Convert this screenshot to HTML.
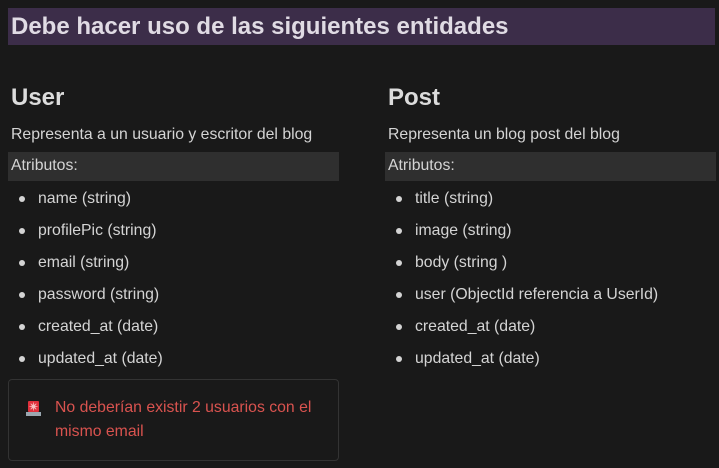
<!DOCTYPE html><html><head><style>
body{margin:0;background:#191919;font-family:"Liberation Sans",sans-serif;color:#d4d4d4;width:719px;height:468px;overflow:hidden;position:relative}
.t{position:absolute;left:8px;top:8px;width:707px;height:37px;background:#3c2d49;color:#e0dbe4;font-weight:bold;font-size:24px;line-height:37px;padding-left:3px;box-sizing:border-box}
.col{position:absolute;top:0;width:331px}
h2{position:absolute;top:84px;left:3px;margin:0;font-size:24px;color:#dcdcdc;line-height:28px}
.d{position:absolute;top:126px;left:3px;font-size:15.8px;line-height:18px}
.a{position:absolute;top:152px;left:0;width:331px;height:29px;background:#2f2f2f;font-size:15.8px;line-height:27px;padding-left:3px;box-sizing:border-box}
ul{position:absolute;top:184px;left:0;margin:0;padding:0;list-style:none;font-size:15.8px}
li{height:32px;line-height:30px;padding-left:30px;position:relative}
li:before{content:"";position:absolute;left:11px;top:12px;width:6px;height:6px;border-radius:50%;background:#d4d4d4}
.c{position:absolute;left:8px;top:379px;width:331px;height:82px;border:1px solid #333;border-radius:4px;box-sizing:border-box;color:#d9534f;font-size:15.8px;line-height:24px;padding:16px 10px 0 46px}
.ic{position:absolute;left:17px;top:20px;width:15px;height:16px}
</style></head><body>
<div class="t">Debe hacer uso de las siguientes entidades</div>
<div class="col" style="left:8px">
<h2>User</h2><div class="d">Representa a un usuario y escritor del blog</div>
<div class="a">Atributos:</div>
<ul><li>name (string)</li><li>profilePic (string)</li><li>email (string)</li><li>password (string)</li><li>created_at (date)</li><li>updated_at (date)</li></ul>
</div>
<div class="col" style="left:385px">
<h2>Post</h2><div class="d">Representa un blog post del blog</div>
<div class="a">Atributos:</div>
<ul><li>title (string)</li><li>image (string)</li><li>body (string )</li><li>user (ObjectId referencia a UserId)</li><li>created_at (date)</li><li>updated_at (date)</li></ul>
</div>
<div class="c"><svg class="ic" viewBox="0 0 15 16"><rect x="2" y="1" width="11" height="11" rx="1" fill="#e0303c"/><rect x="0" y="12" width="15" height="4" fill="#9aa7b0"/><circle cx="7.5" cy="6.5" r="2" fill="#f6c0c0"/><path d="M7.5 2.5v8M3.5 6.5h8M4.7 3.7l5.6 5.6M10.3 3.7l-5.6 5.6" stroke="#f6c0c0" stroke-width=".8"/></svg>No deberían existir 2 usuarios con el mismo email</div>
</body></html>
